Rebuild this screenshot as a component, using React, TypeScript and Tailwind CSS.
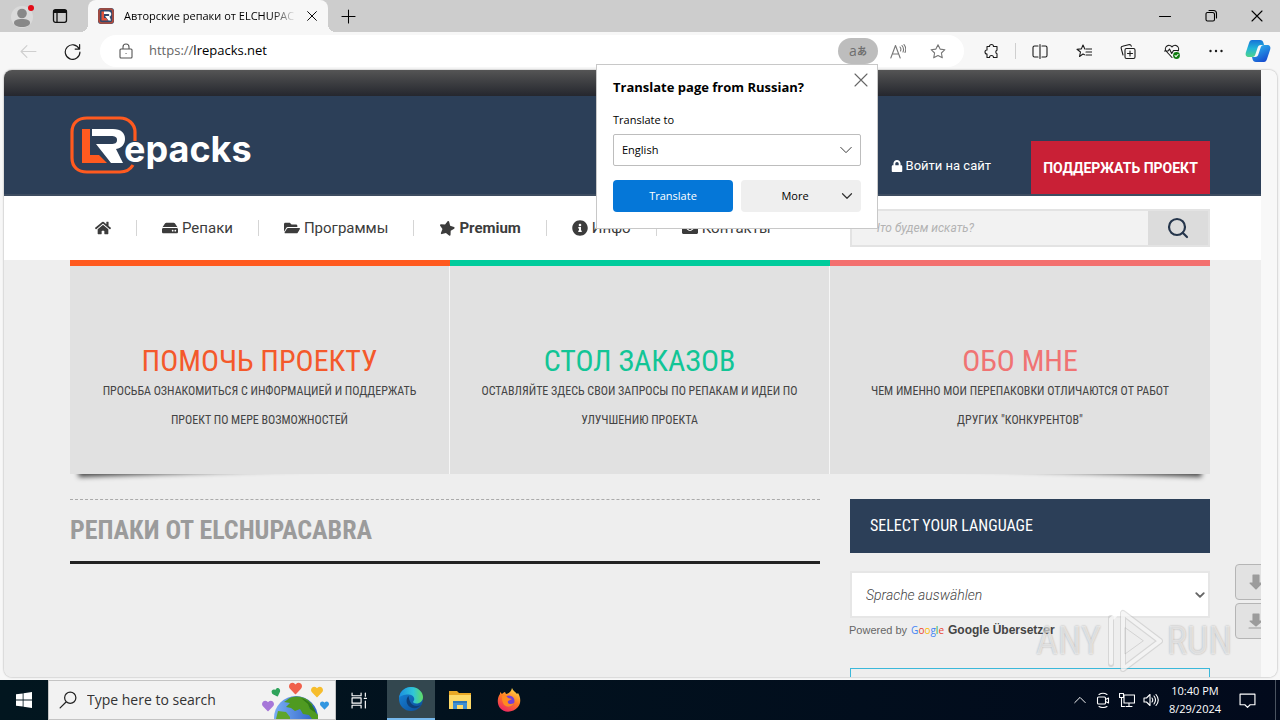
import type { ReactNode } from "react";
import { FaHome, FaHdd, FaFolderOpen, FaStar, FaInfoCircle, FaEnvelope, FaLock, FaHeart } from "react-icons/fa";
import { Search } from "lucide-react";

type IconProps = { d: string; className?: string; children?: ReactNode };

function Line({ d, className = "size-4", children }: IconProps) {
  return (
    <svg viewBox="0 0 16 16" className={className} fill="none" stroke="currentColor" strokeWidth="1.1" strokeLinecap="round" strokeLinejoin="round" aria-hidden="true">
      <path d={d} />
      {children}
    </svg>
  );
}

const STAR = "M8 1.2l2.1 4.4 4.8.6-3.5 3.3.9 4.8L8 12l-4.3 2.3.9-4.8L1.1 6.2l4.8-.6z";
const CROSS = "M3 3l10 10M13 3L3 13";

function Monogram({ className }: { className: string }) {
  return (
    <svg viewBox="0 0 68 60" className={className} aria-hidden="true">
      <path d="M65 26V17C65 9 58 3 50 3H17C8 3 2 8 2 17v26c0 9 6 14 15 14h33c6 0 10-2 13-7" fill="none" stroke="#ff5a1f" strokeWidth="3.2" />
      <path d="M12 14h8v26h9l8 8H12z" fill="#ff5a1f" />
      <path d="M22 14h21c8 0 12 4 12 10 0 5-3 9-9 10l7 14H41L26 29h15c4 0 6-1 6-4s-2-4-6-4H22z" fill="#fff" />
    </svg>
  );
}

function TabStrip() {
  return (
    <header className="flex h-8 shrink-0 items-end bg-[#cdcdcd]">
      <button aria-label="Profile" className="ml-[7px] flex size-8 items-center justify-center">
        <svg viewBox="0 0 28 28" className="size-7">
          <circle cx="13" cy="15" r="11" fill="#dadada" />
          <circle cx="13" cy="11.500" r="4.800" fill="#888" />
          <path d="M5 21c0-3 3-4 8-4s8 1 8 4c0 2-3 4-8 4s-8-2-8-4z" fill="#888" />
          <circle cx="22" cy="6" r="3" fill="#e30b17" />
        </svg>
      </button>
      <button aria-label="Tab actions" className="ml-[5px] flex size-8 items-center justify-center">
        <svg viewBox="0 0 16 16" className="size-4" fill="none" stroke="#111" strokeWidth="1.300">
          <rect x="1.500" y="1.700" width="13" height="12.600" rx="2" />
          <path d="M1.500 3.500h13" strokeWidth="3" />
          <path d="M5 4v10" />
        </svg>
      </button>
      <div className="relative ml-3 flex h-8 w-60 items-center gap-2 rounded-t-lg bg-[#f7f7f7] px-2">
        <span className="absolute bottom-0 -left-2 size-2 bg-[radial-gradient(circle_at_0_0,#cdcdcd_8px,#f7f7f7_8px)]" />
        <span className="absolute -right-2 bottom-0 size-2 bg-[radial-gradient(circle_at_100%_0,#cdcdcd_8px,#f7f7f7_8px)]" />
        <svg viewBox="0 0 16 16" className="ml-[2px] size-4 shrink-0" aria-hidden="true">
          <rect width="16" height="16" rx="3" fill="#33486b" />
          <rect x="1" y="1" width="14" height="14" rx="3" fill="none" stroke="#b84c3a" strokeWidth="1.600" />
          <path d="M3.500 3.500H6V10h2l2 2.500H3.500z" fill="#e5533a" />
          <path d="M6 3.500h4.500C14 3.500 14 8 11.500 8.500l1.500 4h-2.500L7 8h3.500c1 0 1-2 0-2H6z" fill="#fff" />
        </svg>
        <span className="flex-1 pl-[2px] text-[11px] whitespace-nowrap [mask-image:linear-gradient(90deg,#000_86%,transparent)]">Авторские репаки от ELCHUPAC</span>
        <button aria-label="Close tab" className="flex size-4 items-center justify-center">
          <Line d={CROSS} className="size-[14px]" />
        </button>
      </div>
      <button aria-label="New tab" className="ml-1 flex size-8 items-center justify-center">
        <Line d="M8 1v14M1 8h14" className="size-[15px]" />
      </button>
      <div className="ml-auto flex">
        <button aria-label="Minimize" className="flex h-8 w-[46px] items-center justify-center">
          <Line d="M2.500 8.500h11" />
        </button>
        <button aria-label="Restore" className="flex h-8 w-[46px] items-center justify-center">
          <Line d="M4.500 4.500h5a2 2 0 0 1 2 2v5a1.500 1.500 0 0 1-1.500 1.500H4.500A1.500 1.500 0 0 1 3 11.500V6a1.500 1.500 0 0 1 1.500-1.500zM6 2.500h4.500a3 3 0 0 1 3 3V10" />
        </button>
        <button aria-label="Close" className="flex h-8 w-[46px] items-center justify-center">
          <Line d={CROSS} />
        </button>
      </div>
    </header>
  );
}

function CopilotLogo() {
  return (
    <svg viewBox="0 0 26 24" className="h-6 w-[26px]" aria-hidden="true">
      <defs>
        <linearGradient id="cp1" x1="0" y1="0" x2="0" y2="1">
          <stop offset="0" stopColor="#1673d8" />
          <stop offset="0.5" stopColor="#22b5d8" />
          <stop offset="1" stopColor="#4fd38a" />
        </linearGradient>
        <linearGradient id="cp2" x1="0" y1="0" x2="0.6" y2="1">
          <stop offset="0" stopColor="#2fc3f2" />
          <stop offset="1" stopColor="#174fd0" />
        </linearGradient>
      </defs>
      <path d="M7 1h8c2 0 3 1 3.500 3L19 6h-3c-2 0-3 1-3.500 3l-2 6c-.5 2-1.500 3-3.500 3H4c-3 0-4-2-3-5l3-9c.6-2 1.500-3 3-3z" fill="url(#cp1)" />
      <path d="M19 23h-8c-2 0-3-1-3.500-3L7 18h3c2 0 3-1 3.500-3l2-6c.5-2 1.500-3 3.500-3h3c3 0 4 2 3 5l-3 9c-.6 2-1.500 3-3 3z" fill="url(#cp2)" />
    </svg>
  );
}

function Toolbar() {
  return (
    <div className="flex h-[38px] shrink-0 items-center bg-[#f7f7f7] text-[#1a1a1a]">
      <button aria-label="Back" className="ml-4 flex w-6 justify-center text-[#cfcfcf]">
        <Line d="M15 8H1M6.500 2.500L1 8l5.500 5.500" className="size-[17px]" />
      </button>
      <button aria-label="Refresh" className="ml-5 flex w-6 justify-center">
        <Line d="M14.300 5.500A6.900 6.900 0 1 0 15 8.500M14.700 1.500v4.200h-4.200" className="size-[17px]" />
      </button>
      <div className="ml-4 flex h-8 w-[864px] items-center rounded-full bg-white pr-[18px] pl-[18px] text-[13px]">
        <Line d="M3 6h10a1 1 0 0 1 1 1v7a1 1 0 0 1-1 1H3a1 1 0 0 1-1-1V7a1 1 0 0 1 1-1zM5 6V4a3 3 0 0 1 6 0v2M8 10.500h.1" className="size-4 text-[#555]" />
        <label htmlFor="address" className="ml-[15px] text-[#666]">https://</label>
        <input id="address" defaultValue="lrepacks.net" className="min-w-0 flex-1 bg-transparent text-black outline-none" />
        <button aria-label="Translate this page" className="flex h-[26px] w-10 items-center justify-center rounded-full bg-[#bdbdbd] text-sm leading-none text-[#6f6f6f]">
          a<span className="text-[10px] font-bold">あ</span>
        </button>
        <button aria-label="Read aloud" className="ml-3 flex w-4 justify-center text-[#777]">
          <Line d="M.8 14.500L5.500 2l4.700 12.500M2.500 10.500h6M10 3.500q1.500 1.800.5 4M12 2q2.500 3 1 6.500M14 1q3 4 1 8" className="size-[17px]" />
        </button>
        <button aria-label="Favorite" className="ml-6 flex w-4 justify-center text-[#777]">
          <Line d={STAR} className="size-[17px]" />
        </button>
      </div>
      <div className="ml-5 flex flex-1 items-center">
        <button aria-label="Extensions" className="flex w-4">
          <Line d="M3 3h2.500a2 2 0 0 1 4 0H13v3.800a1.800 1.800 0 0 0 0 3.400V14H9.500a2 2 0 0 0-4 0H3v-3.500a2 2 0 0 1 0-4z" className="size-[17px]" />
        </button>
        <span className="ml-[15px] h-4 w-px bg-[#cfcfcf]" />
        <button aria-label="Split screen" className="ml-4 flex w-4">
          <Line d="M6 2.500H2.500a1.500 1.500 0 0 0-1.500 1.500v8a1.500 1.500 0 0 0 1.500 1.500H6M10 2.500h3.500A1.500 1.500 0 0 1 15 4v8a1.500 1.500 0 0 1-1.500 1.500H10M8 1v14" className="size-[17px]" />
        </button>
        <button aria-label="Favorites" className="ml-7 flex w-4">
          <Line d="M8.500 11.200L7 10.500 3.500 13l1-4.500L1 5.800l4.400-.4L7 1.500l1.800 3.900M10 5.500h6M10 8.500h6M10 11.500h6" className="size-[17px]" />
        </button>
        <button aria-label="Collections" className="ml-7 flex w-4">
          <Line d="M6.500 5h7A1.500 1.500 0 0 1 15 6.500v7a1.500 1.500 0 0 1-1.500 1.500h-7A1.500 1.500 0 0 1 5 13.500v-7A1.500 1.500 0 0 1 6.500 5zM10 7.500v5M7.500 10h5M3 11.500L1.200 4.800A1.700 1.700 0 0 1 2.500 2.700L9.500 1c1 0 1.500.6 1.800 1.700" className="size-[17px]" />
        </button>
        <button aria-label="Browser essentials" className="ml-7 flex w-4">
          <Line d="M8 14L2 7.500a3.600 3.600 0 0 1 6-4 3.600 3.600 0 0 1 6 4M.5 7.500H4l1.500-2 2.200 4.500L9.500 7h5" className="size-[17px]">
            <circle cx="12.500" cy="12" r="3.400" fill="#107c10" stroke="none" />
            <path d="M11 12.200l1 1 2-2.200" stroke="#fff" />
          </Line>
        </button>
        <button aria-label="Settings and more" className="ml-7 flex w-4">
          <svg viewBox="0 0 16 16" className="size-4" fill="currentColor">
            <circle cx="2.500" cy="8" r="1.200" />
            <circle cx="8" cy="8" r="1.200" />
            <circle cx="13.500" cy="8" r="1.200" />
          </svg>
        </button>
        <button aria-label="Copilot" className="ml-[21px]">
          <CopilotLogo />
        </button>
      </div>
    </div>
  );
}

const NAV = [
  { icon: FaHdd, label: "Репаки" },
  { icon: FaFolderOpen, label: "Программы" },
  { icon: FaStar, label: "Premium" },
  { icon: FaInfoCircle, label: "Инфо" },
  { icon: FaEnvelope, label: "Контакты" },
];

const FEATURES = [
  { title: "ПОМОЧЬ ПРОЕКТУ", text: "ПРОСЬБА ОЗНАКОМИТЬСЯ С ИНФОРМАЦИЕЙ И ПОДДЕРЖАТЬ ПРОЕКТ ПО МЕРЕ ВОЗМОЖНОСТЕЙ", bar: "border-[#ff5a1f]", ink: "text-[#f4592b]" },
  { title: "СТОЛ ЗАКАЗОВ", text: "ОСТАВЛЯЙТЕ ЗДЕСЬ СВОИ ЗАПРОСЫ ПО РЕПАКАМ И ИДЕИ ПО УЛУЧШЕНИЮ ПРОЕКТА", bar: "border-[#00cc9c]", ink: "text-[#12c596]" },
  { title: "ОБО МНЕ", text: "ЧЕМ ИМЕННО МОИ ПЕРЕПАКОВКИ ОТЛИЧАЮТСЯ ОТ РАБОТ ДРУГИХ \"КОНКУРЕНТОВ\"", bar: "border-[#f3706f]", ink: "text-[#f07373]" },
];

function SiteHeader() {
  return (
    <>
      <div className="h-[26px] shrink-0 bg-linear-to-b from-[#555] to-[#25272e]" />
      <div className="flex h-[100px] shrink-0 items-end border-b-2 border-[#3e4d61] bg-[#2c3f58] pr-[51px] pl-[66px]">
        <a href="#home" aria-label="LRepacks" className="mb-[19px] flex items-center text-white">
          <Monogram className="h-[60px] w-[68px]" />
          <span className="mt-2 -ml-[14px] font-[Inter,sans-serif] text-[36px] leading-[52px] font-bold">epacks</span>
        </a>
        <a href="#login" className="mb-4 ml-auto flex items-center gap-[3px] text-[13px] leading-6 text-white">
          <FaLock className="size-3" />
          Войти на сайт
        </a>
        <a href="#donate" className="ml-10 flex h-[53px] w-[179px] items-center justify-center bg-[#c92036] text-sm font-bold whitespace-nowrap text-white">ПОДДЕРЖАТЬ ПРОЕКТ</a>
      </div>
      <div className="flex h-16 shrink-0 items-center bg-white pr-[51px] pl-[66px]">
        <nav className="flex items-center text-[15px] leading-4 text-[#3c3c3c]">
          <a href="#home" aria-label="Главная" className="flex h-4 items-center border-r border-[#d5d5d5] px-[25px]">
            <FaHome className="size-4" />
          </a>
          {NAV.map(({ icon: Icon, label }) => (
            <a key={label} href={"#" + label} className={"flex h-4 items-center gap-1 px-[25px] " + (label === "Контакты" ? "" : "border-r border-[#d5d5d5] ") + (label === "Premium" ? "font-bold" : "")}>
              <Icon className={label === "Premium" ? "size-4 rotate-12" : "size-4"} />
              {label}
            </a>
          ))}
        </nav>
        <form className="ml-auto flex h-[38px] w-[360px] border-2 border-[#e3e3e3] bg-[#f2f2f2]">
          <input aria-label="Что будем искать?" placeholder="Что будем искать?" className="min-w-0 flex-1 bg-transparent pl-5 text-xs italic outline-none placeholder:text-[#b3b3b3]" />
          <button type="button" aria-label="Найти" className="flex w-[60px] items-center justify-center bg-[#dcdcdc] text-[#26364c]">
            <Search className="size-6" strokeWidth={2.2} />
          </button>
        </form>
      </div>
    </>
  );
}

function Features() {
  return (
    <div className="relative">
      <span className="absolute bottom-[9px] left-2 h-3 w-1/3 origin-left rotate-[-2deg] shadow-[0_12px_5px_rgba(0,0,0,0.7)]" />
      <span className="absolute right-2 bottom-[9px] h-3 w-1/3 origin-right rotate-[2deg] shadow-[0_12px_5px_rgba(0,0,0,0.7)]" />
      <div className="relative grid h-[214px] grid-cols-3 bg-[#e1e1e1] text-center font-['Roboto_Condensed',Roboto,sans-serif]">
        {FEATURES.map((f, i) => (
          <a key={f.title} href={"#feature" + i} className={"border-t-6 " + f.bar}>
            <div className={"h-full px-6 pt-[77px] " + (i < 2 ? "border-r border-r-[#f6f6f6]" : "")}>
              <h2 className={"text-[30px] leading-9 " + f.ink}>{f.title}</h2>
              <p className="-mt-[2px] text-xs leading-[29px] text-[#444]">{f.text}</p>
            </div>
          </a>
        ))}
      </div>
    </div>
  );
}

function Page() {
  return (
    <main className="flex min-w-0 flex-1 flex-col overflow-hidden bg-[#eee] font-[Roboto,sans-serif]">
      <SiteHeader />
      <div className="pr-[51px] pl-[66px]">
        <Features />
        <div className="mt-[25px] flex gap-[30px]">
          <section className="flex-1">
            <h1 className="border-t border-b-3 border-t-[#aaa] border-b-[#222] pt-[13px] pb-[14px] font-['Roboto_Condensed',Roboto,sans-serif] text-[26px] leading-[34px] font-bold text-[#9b9b9b] [border-top-style:dashed]">РЕПАКИ ОТ ELCHUPACABRA</h1>
          </section>
          <aside className="w-[360px]">
            <h2 className="bg-[#2c3f58] px-5 font-['Roboto_Condensed',Roboto,sans-serif] text-base leading-[54px] text-white">SELECT YOUR LANGUAGE</h2>
            <div className="mt-[18px] grid border-2 border-[#e6e6e6] bg-white">
              <select aria-label="Sprache auswählen" className="col-start-1 row-start-1 h-[43px] appearance-none bg-transparent pl-[14px] text-sm font-light text-[#444] italic outline-none">
                <option>Sprache auswählen</option>
              </select>
              <Line d="M3 5.500l5 5 5-5" className="pointer-events-none col-start-1 row-start-1 mr-[2px] size-3 self-center justify-self-end stroke-[2.5] text-[#666]" />
            </div>
            <p className="-ml-px flex items-baseline gap-1 font-['Liberation_Sans',sans-serif] text-[11px] leading-6 text-[#666]">
              Powered by
              <span className="font-['Open_Sans',sans-serif] text-[10px]">
                <span className="text-[#4285f4]">G</span>
                <span className="text-[#ea4335]">o</span>
                <span className="text-[#fbbc05]">o</span>
                <span className="text-[#4285f4]">g</span>
                <span className="text-[#34a853]">l</span>
                <span className="text-[#ea4335]">e</span>
              </span>
              <a href="#translate" className="text-xs font-bold text-[#444]">Google Übersetzer</a>
            </p>
            <div className="mt-[26px] h-16 border border-[#3bb8da]" />
          </aside>
        </div>
      </div>
    </main>
  );
}

function TranslatePopup() {
  return (
    <div role="dialog" aria-labelledby="tr-title" className="absolute top-16 left-[596px] w-[282px] border border-[#c8c8c8] bg-white px-4 pb-4 text-[11px] text-black">
      <div className="flex items-start justify-between pt-3">
        <h2 id="tr-title" className="text-[13px] leading-5 font-bold">Translate page from Russian?</h2>
        <button aria-label="Close" className="-mt-[5px] -mr-2 text-[#666]">
          <Line d="M2 2l12 12M14 2L2 14" />
        </button>
      </div>
      <label htmlFor="tr-lang" className="mt-[15px] block leading-4">Translate to</label>
      <div className="mt-[6px] grid">
        <select id="tr-lang" className="col-start-1 row-start-1 h-8 appearance-none rounded-xs border border-[#bdbdbd] pl-2 text-[11px] outline-none">
          <option>English</option>
        </select>
        <Line d="M2 5l6 6 6-6" className="pointer-events-none col-start-1 row-start-1 mr-2 size-[14px] self-center justify-self-end text-[#333]" />
      </div>
      <div className="mt-[14px] grid grid-cols-2 gap-2">
        <button className="h-8 rounded-sm bg-[#0577d8] text-white">Translate</button>
        <button className="flex h-8 items-center rounded-sm bg-[#efefef] pr-2">
          <span className="flex-1 pl-2">More</span>
          <Line d="M2 5l6 6 6-6" className="size-3 stroke-[1.6] text-[#333]" />
        </button>
      </div>
    </div>
  );
}

function Watermark() {
  return (
    <div className="pointer-events-none absolute right-12 bottom-[46px] flex items-center gap-1 font-['Roboto_Condensed',sans-serif] text-[38px] leading-[66px] text-white/60 [text-shadow:0_0_2px_rgba(0,0,0,0.3)]">
      ANY
      <svg viewBox="0 0 58 66" className="h-[66px] w-[58px]" fill="none" stroke="#fff" strokeOpacity="0.7" strokeWidth="4" strokeLinejoin="round" strokeLinecap="round">
        <path d="M18 5v56l37-28zM6 10v46" stroke="#aaa" strokeOpacity="0.35" strokeWidth="6" />
        <path d="M18 5v56l37-28zM10 8l-4 3v44" />
        <path d="M20 20v26l18-13z" stroke="#aaa" strokeOpacity="0.4" strokeWidth="1" />
      </svg>
      RUN
    </div>
  );
}

function Globe() {
  return (
    <svg viewBox="0 0 70 38" className="h-[38px] w-[70px] self-end" aria-hidden="true">
      <defs>
        <linearGradient id="sea" x1="0" x2="1">
          <stop offset="0" stopColor="#79aef5" />
          <stop offset="1" stopColor="#2b5fc4" />
        </linearGradient>
      </defs>
      <circle cx="35" cy="37" r="22" fill="url(#sea)" />
      <path d="M26 19c6-5 15-4 21 0l5 5-4 2 5 4 4 4v4h-6l-3-4-6-1-3-5-5 2-4-3-5-1 4-4-6-1z" fill="#4f9a21" />
      <path d="M40 17c7 2 13 8 15 15l-6-4-2-5z" fill="#2f7a18" />
      <path d="M17 30l8 1 4 5v2H15z" fill="#5fa52c" />
      <FaHeart x="28" y="1" size="13" color="#f0604c" />
      <FaHeart x="11" y="7" size="9" color="#2fa35b" transform="rotate(-20 16 12)" />
      <FaHeart x="50" y="5" size="12" color="#f6bd2c" />
      <FaHeart x="1" y="19" size="12" color="#a677d8" />
      <FaHeart x="59" y="20" size="9" color="#3296e0" />
    </svg>
  );
}

function EdgeLogo() {
  return (
    <svg viewBox="0 0 24 24" className="size-6" aria-hidden="true">
      <defs>
        <linearGradient id="eg1" x1="0" x2="1">
          <stop offset="0" stopColor="#1b8fe0" />
          <stop offset="0.6" stopColor="#30c6d8" />
          <stop offset="1" stopColor="#61dc63" />
        </linearGradient>
        <linearGradient id="eg2" x1="0" y1="0" x2="1" y2="1">
          <stop offset="0" stopColor="#1788dc" />
          <stop offset="1" stopColor="#0c4a96" />
        </linearGradient>
      </defs>
      <circle cx="12" cy="12" r="12" fill="url(#eg2)" />
      <path d="M0 11C1 4 6 0 12 0c7 0 12 5 12 10 0 4-3 6.500-6.500 6.500-3 0-4-1.500-3-2.500 2-2 0-6.500-5-6.500C5 7.500 1 9 0 11z" fill="url(#eg1)" />
      <path d="M9.500 9C7 11 6.500 17 11 20c4 2.500 8.500 1 11-2-2.500 1-5.500 1.500-8 0s-4-5-4.500-9z" fill="#0e3f78" />
    </svg>
  );
}

function ExplorerLogo() {
  return (
    <svg viewBox="0 0 24 22" className="h-[22px] w-6" aria-hidden="true">
      <path d="M1 2h8l2 2h12v16H1z" fill="#e9a825" />
      <path d="M1 6h22v14H1z" fill="#fdd968" />
      <path d="M5 12h14v8h-4v-4H9v4H5z" fill="#3f8fd2" />
      <path d="M5 12h14v2H5z" fill="#2d77b8" />
    </svg>
  );
}

function FirefoxLogo() {
  return (
    <svg viewBox="0 0 24 24" className="size-6" aria-hidden="true">
      <defs>
        <linearGradient id="ff" x1="0.8" y1="0" x2="0.3" y2="1">
          <stop offset="0" stopColor="#ffe14a" />
          <stop offset="0.5" stopColor="#ff7a22" />
          <stop offset="1" stopColor="#ee2662" />
        </linearGradient>
      </defs>
      <path d="M15 0c1 3 4 4 5 6l1-1c3 5 3 10 0 14-5 6-14 6-18 1C0 16 0 10 3 6V4l2 2c1-1 2-2 3-2l1 2c3-1 5-2 6-6z" fill="url(#ff)" />
      <circle cx="12" cy="13" r="5.500" fill="#7340d6" />
      <path d="M5 8c3-1 5 0 6 2l4 1-4 2c-1 3 3 4 6 2-2 5-9 5-11 0-1-2-1-5-1-7z" fill="#ff8a20" />
    </svg>
  );
}

function Taskbar() {
  return (
    <footer className="flex h-10 shrink-0 items-stretch bg-linear-to-r from-[#02161f] to-[#020a1c] text-white">
      <button aria-label="Start" className="flex w-12 items-center justify-center">
        <svg viewBox="0 0 16 16" className="size-4" fill="#fff">
          <path d="M0 2.300L6.700 1.400v6.200H0zM7.500 1.300L16 0v7.600H7.500zM0 8.400h6.700v6.200L0 13.700zM7.500 8.400H16V16l-8.500-1.300z" />
        </svg>
      </button>
      <label className="flex w-72 items-center border border-[#c4c4c4] bg-[#f2f2f2] pl-[10px] text-[#222]">
        <Line d="M10 1a5 5 0 1 1 0 10 5 5 0 0 1 0-10zM6.500 9.500L1 15" className="size-[18px] shrink-0" />
        <input aria-label="Search" placeholder="Type here to search" className="min-w-0 flex-1 bg-transparent pl-[10px] text-sm outline-none placeholder:text-[#333]" />
        <span className="mr-1 flex h-full">
          <Globe />
        </span>
      </label>
      <button aria-label="Task view" className="flex w-[51px] items-center justify-center pr-1">
        <Line d="M1 1v2.500h8.500V1M1 15v-2.500h8.500V15M1 5.500h8.500v5H1zM13.500 1v3M13.500 8.500V15M12.500 6h2" className="size-[17px]" />
      </button>
      <button aria-label="Microsoft Edge" className="flex w-12 items-center justify-center border-b-2 border-[#76b9ed] bg-[#33474f]">
        <EdgeLogo />
      </button>
      <button aria-label="File Explorer" className="flex w-[49px] items-center justify-center">
        <ExplorerLogo />
      </button>
      <button aria-label="Firefox" className="flex w-[49px] items-center justify-center">
        <FirefoxLogo />
      </button>
      <div className="ml-auto flex items-center gap-2">
        <Line d="M2 11l6-6 6 6" className="size-[14px]" />
        <Line d="M3.500 5h6a1 1 0 0 1 1 1v5a1 1 0 0 1-1 1h-6a1 1 0 0 1-1-1V6a1 1 0 0 1 1-1zM10.500 7.500l3-1.500v5l-3-1.500M4 2.500q4-2.500 8 0M4 14.500q4 2 8 0" />
        <Line d="M5 3h10.500v8H5zM.5 1.500h4v4h-4zM2.500 5.500v9h3M10 11v3.500M7 14.500h6" />
        <Line d="M1 6h2.500L7 2.500v11L3.500 10H1zM9 6q1.500 2 0 4M11 4q3 4 0 8M13 2.500q4.500 5.500 0 11" />
        <time className="w-14 text-center text-[11px] leading-[18px] whitespace-nowrap">
          10:40 PM
          <br />
          8/29/2024
        </time>
        <Line d="M1 2h14v10h-4.500L8 14.500 5.500 12H1z" className="mr-[11px] ml-2 size-[17px]" />
        <span className="mr-1 h-10 w-px bg-[#4a5360]" />
      </div>
    </footer>
  );
}

export default function App() {
  return (
    <div className="relative flex h-screen flex-col overflow-hidden bg-[#f7f7f7] font-['Open_Sans','Noto_Sans_CJK_JP',sans-serif] text-black">
      <TabStrip />
      <Toolbar />
      <div className="mr-[3px] mb-[3px] ml-1 flex min-h-0 flex-1 overflow-hidden rounded-lg shadow-[0_0_2px_rgba(0,0,0,0.4)]">
        <div className="relative flex min-w-0 flex-1 overflow-hidden">
          <Page />
          <div className="absolute right-0 bottom-[38px] flex w-[26px] flex-col gap-[3px] overflow-hidden text-[#9c9c9c]">
            {["M8 15l6-6h-3V1H5v8H2z", "M8 13l6-5h-3V1H5v7H2zM1 15h14"].map((d) => (
              <button key={d} aria-label="Scroll down" className="flex h-9 w-[42px] shrink-0 items-center justify-center rounded-sm border border-[#b5b5b5] bg-[#e2e2e2]">
                <Line d={d} className="size-4 fill-current" />
              </button>
            ))}
          </div>
        </div>
        <div className="w-4 shrink-0 bg-[#f8f8f8]" />
      </div>
      <Taskbar />
      <TranslatePopup />
      <Watermark />
    </div>
  );
}
